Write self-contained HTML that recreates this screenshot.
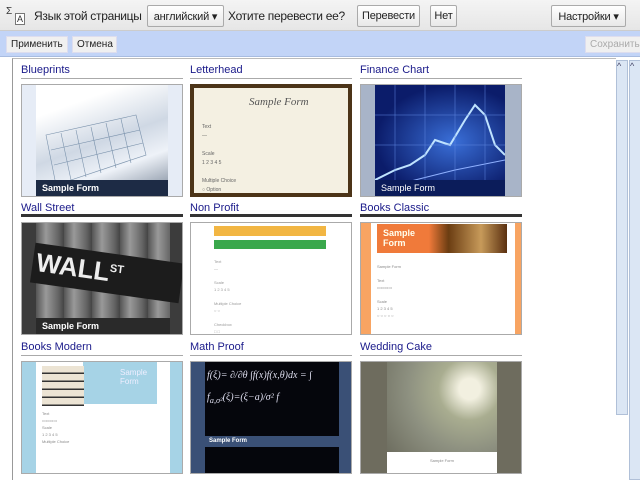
<!DOCTYPE html>
<html><head><meta charset="utf-8"><style>
*{margin:0;padding:0;box-sizing:border-box}
body{width:640px;height:480px;overflow:hidden;background:#fff;font-family:"Liberation Sans",sans-serif;position:relative}
.top{position:absolute;left:0;top:0;width:640px;height:31px;background:linear-gradient(#f4f4f4,#e6e6e6);border-bottom:1px solid #ccc}
.t{position:absolute;font-size:12px;color:#222;top:9px;white-space:nowrap;letter-spacing:-0.3px}
.btn{position:absolute;top:5px;height:22px;border:1px solid #aaa;background:linear-gradient(#fff,#e8e8e8);font-size:11px;color:#222;padding:4px 3px 0;border-radius:2px;white-space:nowrap;overflow:hidden;text-align:center;letter-spacing:-0.2px}
.blue{position:absolute;left:0;top:31px;width:640px;height:26px;background:#c2d4f7;border-bottom:1px solid #a8bce0}
.bb{position:absolute;top:5px;height:17px;background:#f0f0f0;border:1px solid #dde;font-size:10px;color:#222;padding:2px 4px 0;white-space:nowrap}
.main{position:absolute;left:12px;top:58px;width:604px;height:422px;border-left:1px solid #999;border-top:1px solid #bbb;background:#fff}
.title{position:absolute;font-size:11px;color:#1a1a8a;width:162px;height:11px;border-bottom:1px solid #aaa}
.title span{position:absolute;top:-4px;left:0}
.title.dk{border-bottom:3px solid #333}
.img{position:absolute;width:162px;height:113px;border:1px solid #aaa;overflow:hidden}
.sf{position:absolute;left:0;bottom:0;font-size:9px;font-weight:bold;color:#fff;padding:3px 6px}
.sb{position:absolute;top:60px;width:12px;background:#dbe6f4;border:1px solid #b0c0d8}
</style></head><body>
<div class="top">
 <div style="position:absolute;left:6px;top:6px;width:22px;height:20px;font-size:10px;color:#333"><span style="position:absolute;left:0;top:0">Σ</span><span style="position:absolute;left:9px;top:7px;border:1px solid #777;background:#fff;padding:0 1px;font-size:9px">A</span></div>
 <div class="t" style="left:34px">Язык этой страницы</div>
 <div class="btn" style="left:147px;width:77px">английский ▾</div>
 <div class="t" style="left:228px">Хотите перевести ее?</div>
 <div class="btn" style="left:357px;width:63px">Перевести</div>
 <div class="btn" style="left:430px;width:27px">Нет</div>
 <div class="btn" style="left:551px;width:75px">Настройки ▾</div>
</div>
<div class="blue">
 <div class="bb" style="left:6px;width:62px">Применить</div>
 <div class="bb" style="left:72px;width:45px">Отмена</div>
 <div class="bb" style="left:585px;width:60px;color:#aaa">Сохранить</div>
</div>
<div class="main"></div>
<div class="sb" style="left:616px;height:355px"></div>
<div class="sb" style="left:629px;height:420px"></div>
<div style="position:absolute;left:617px;top:61px;font-size:9px;color:#446">^</div>
<div style="position:absolute;left:630px;top:61px;font-size:9px;color:#446">^</div>

<div class="title" style="left:21px;top:68px"><span>Blueprints</span></div>
<div class="title" style="left:190px;top:68px"><span>Letterhead</span></div>
<div class="title" style="left:360px;top:68px"><span>Finance Chart</span></div>

<div class="img" style="left:21px;top:84px;background:#e6ecf6">
 <div style="position:absolute;left:14px;top:0;width:132px;height:113px;background:linear-gradient(160deg,#fff 20%,#cfd8e4 50%,#eef2f8 70%,#6f7d90 100%)"></div>
 <svg style="position:absolute;left:14px;top:0" width="132" height="113"><g stroke="#7890aa" stroke-width=".6" fill="none"><path d="M10 50 L100 30 L110 70 L20 100Z"/><path d="M25 48 L35 95M40 45 L50 92M55 42 L65 88M70 38 L80 83M85 34 L95 78"/><path d="M15 65 L104 45M18 80 L107 58"/></g></svg>
 <div class="sf" style="left:14px;width:132px;background:#1d2b45">Sample Form</div>
</div>
<div class="img" style="left:190px;top:84px;background:#4c3418;border:4px solid #4c3418">
 <div style="position:absolute;left:0;top:0;right:0;bottom:0;background:#f4f0e2"></div>
 <div style="position:absolute;left:55px;top:8px;font:italic 11px 'Liberation Serif',serif;color:#555">Sample Form</div>
 <div style="position:absolute;left:8px;top:35px;font-size:5px;color:#666;line-height:9px">Text<br>—<br><br>Scale<br>1 2 3 4 5<br><br>Multiple Choice<br>○ Option<br>○ Option</div>
</div>
<div class="img" style="left:360px;top:84px;background:#a8b4c8">
 <div style="position:absolute;left:14px;top:0;width:130px;height:113px;background:radial-gradient(ellipse at 60% 50%,#3a6fd8,#0b1c6a 70%)"></div>
 <svg style="position:absolute;left:14px;top:0" width="130" height="113"><path d="M0 95 L20 85 L35 80 L50 70 L60 55 L75 60 L90 35 L100 20 L110 30 L120 60 L130 70" stroke="#bfe3ff" stroke-width="2" fill="none"/><path d="M0 105 L40 95 L80 85 L130 75" stroke="#8fb0ff" fill="none"/><g stroke="#5f86e0" stroke-width=".5"><path d="M20 0V113M50 0V113M80 0V113M110 0V113M0 30H130M0 60H130"/></g></svg>
 <div class="sf" style="left:14px;font-weight:normal;background:#0b1c5a;width:130px">Sample Form</div>
</div>

<div class="title dk" style="left:21px;top:206px"><span>Wall Street</span></div>
<div class="title dk" style="left:190px;top:206px"><span>Non Profit</span></div>
<div class="title dk" style="left:360px;top:206px"><span>Books Classic</span></div>

<div class="img" style="left:21px;top:222px;background:#3c3c3c">
 <div style="position:absolute;left:14px;top:0;width:134px;height:113px;background:repeating-linear-gradient(90deg,#555 0,#999 10px,#666 22px,#444 28px)"></div>
 <div style="position:absolute;left:10px;top:30px;width:150px;height:40px;background:#1c1c1c;transform:rotate(8deg)"></div>
 <div style="position:absolute;left:14px;top:30px;font:bold 26px 'Liberation Sans',sans-serif;color:#eee;transform:rotate(8deg)">WALL<sup style="font-size:11px">ST</sup></div>
 <div class="sf" style="left:14px;width:134px;background:#2a2a2a">Sample Form</div>
</div>
<div class="img" style="left:190px;top:222px;background:#fff">
 <div style="position:absolute;left:23px;top:3px;width:112px;height:10px;background:#f2b643"></div>
 <div style="position:absolute;left:23px;top:17px;width:112px;height:9px;background:#3aa84c"></div>
 <div style="position:absolute;left:23px;top:35px;font-size:4px;color:#999;line-height:7px">Text<br>—<br><br>Scale<br>1 2 3 4 5<br><br>Multiple Choice<br>○ ○<br><br>Checkbox<br>□ □</div>
</div>
<div class="img" style="left:360px;top:222px;background:#f8a462">
 <div style="position:absolute;left:10px;top:0;width:144px;height:113px;background:#fff"></div>
 <div style="position:absolute;left:16px;top:1px;width:130px;height:29px;background:linear-gradient(90deg,#f07a3a 40%,#6b3d12 55%,#c79a5a 80%,#5a3010)"></div>
 <div style="position:absolute;left:22px;top:5px;font:bold 9px sans-serif;color:#ffe">Sample<br>Form</div>
 <div style="position:absolute;left:16px;top:40px;font-size:4px;color:#888;line-height:7px">Sample Form<br><br>Text<br>▭▭▭▭<br><br>Scale<br>1 2 3 4 5<br>○ ○ ○ ○ ○</div>
</div>

<div class="title" style="left:21px;top:345px"><span>Books Modern</span></div>
<div class="title" style="left:190px;top:345px"><span>Math Proof</span></div>
<div class="title" style="left:360px;top:345px"><span>Wedding Cake</span></div>

<div class="img" style="left:21px;top:361px;background:#a6d3e6">
 <div style="position:absolute;left:14px;top:0;width:134px;height:113px;background:#fff"></div>
 <div style="position:absolute;left:61px;top:0;width:74px;height:42px;background:#a6d3e6"></div>
 <div style="position:absolute;left:20px;top:4px;width:42px;height:40px;background:repeating-linear-gradient(#ece4d4 0,#ece4d4 6px,#333 7px,#333 8px)"></div>
 <div style="position:absolute;left:98px;top:6px;font-size:8px;color:#eef">Sample<br>Form</div>
 <div style="position:absolute;left:20px;top:48px;font-size:4px;color:#888;line-height:7px">Text<br>▭▭▭▭<br>Scale<br>1 2 3 4 5<br>Multiple Choice</div>
</div>
<div class="img" style="left:190px;top:361px;background:#3a5076">
 <div style="position:absolute;left:14px;top:0;width:134px;height:74px;background:#05060c"></div>
 <div style="position:absolute;left:16px;top:3px;font:italic 10px 'Liberation Serif',serif;color:#dde;line-height:22px;white-space:nowrap">f(ξ)= ∂/∂θ ∫f(x)f(x,θ)dx = ∫<br>f<sub>a,σ²</sub>(ξ)=(ξ−a)/σ² f</div>
 <div style="position:absolute;left:14px;top:74px;width:134px;height:11px;background:#3a5076;font:bold 6px sans-serif;color:#fff;padding:2px 4px">Sample Form</div>
 <div style="position:absolute;left:14px;top:85px;width:134px;height:28px;background:#05060c"></div>
</div>
<div class="img" style="left:360px;top:361px;background:#6e6c5e">
 <div style="position:absolute;left:26px;top:0;width:110px;height:90px;background:radial-gradient(circle at 75% 30%,#f2f0e0 10%,#a9ad90 30%,#8d9080 60%,#6e6e60)"></div>
 <div style="position:absolute;left:26px;top:90px;width:110px;height:23px;background:#fff;font-size:4px;color:#888;text-align:center;padding-top:6px">Sample Form</div>
</div>
</body></html>
